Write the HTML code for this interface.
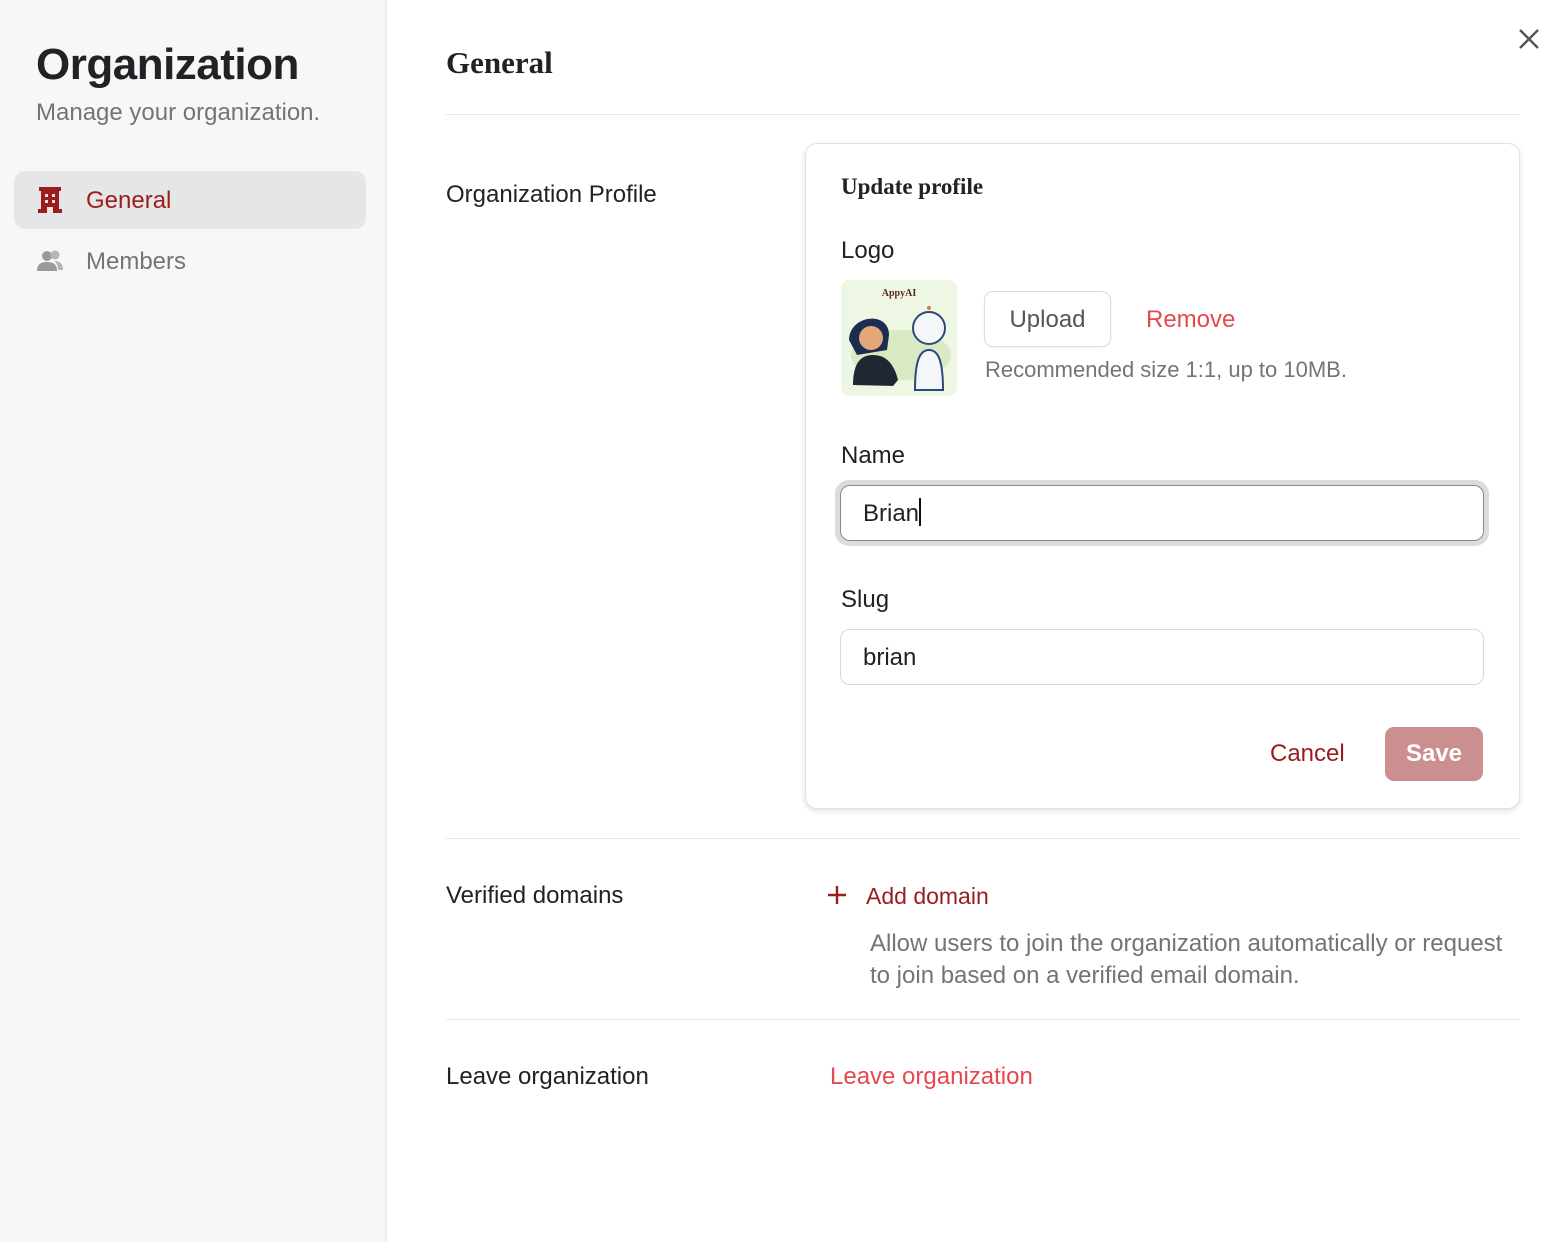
<!DOCTYPE html>
<html><head><meta charset="utf-8"><style>
*{box-sizing:border-box;margin:0;padding:0}
body{width:1556px;height:1242px;position:relative;background:#fff;font-family:"Liberation Sans",sans-serif;color:#212126;overflow:hidden}
.a{position:absolute;white-space:nowrap}
.side{position:absolute;left:0;top:0;width:387px;height:1242px;background:#f7f7f7;border-right:2px solid #ececec}
.hr{position:absolute;left:446px;width:1074px;height:1px;background:#e8e8e8}
.card{position:absolute;left:805px;top:143px;width:715px;height:666px;background:#fff;border:1px solid #e2e2e2;border-radius:12px;box-shadow:0 2px 6px rgba(0,0,0,.12)}
.inp{position:absolute;left:840px;width:644px;height:56px;border:1px solid #d9d9d9;border-radius:10px;font-size:24px;padding:0 22px;line-height:54px}
</style></head><body>
<div class="side"></div>
<div class="a" style="left:36px;top:40px;font-size:44px;font-weight:bold;letter-spacing:-.5px">Organization</div>
<div class="a" style="left:36px;top:99px;font-size:24px;color:#747474">Manage your organization.</div>
<div class="a" style="left:14px;top:171px;width:352px;height:58px;background:#e6e6e6;border-radius:11px"></div>
<svg class="a" style="left:38px;top:187px" width="24" height="26" viewBox="0 0 24 26"><path fill="#9b1c1c" d="M1 0h22v4h-2v18h3v4H15v-6h-6v6H0v-4h3V4H1z"/><rect x="7" y="7" width="3" height="3" fill="#e6e6e6"/><rect x="14" y="7" width="3" height="3" fill="#e6e6e6"/><rect x="7" y="13" width="3" height="3" fill="#e6e6e6"/><rect x="14" y="13" width="3" height="3" fill="#e6e6e6"/></svg>
<div class="a" style="left:86px;top:187px;font-size:24px;color:#9b1c1c">General</div>
<svg class="a" style="left:37px;top:250px" width="27" height="22" viewBox="0 0 27 22"><circle cx="10" cy="6" r="5" fill="#9a9a9a"/><circle cx="18" cy="5" r="4.5" fill="#b5b5b5"/><path d="M0 21c0-7 4-9 10-9s10 2 10 9z" fill="#9a9a9a"/><path d="M17 11c5 0 9 2 9 9h-5c0-4-1-7-4-9z" fill="#b5b5b5"/></svg>
<div class="a" style="left:86px;top:248px;font-size:24px;color:#747474">Members</div>

<div class="a" style="left:446px;top:45px;font-size:31px;font-weight:bold;font-family:'Liberation Serif',serif">General</div>
<svg class="a" style="left:1518px;top:28px" width="22" height="22" viewBox="0 0 22 22"><path d="M2 2l18 18M20 2L2 20" stroke="#555" stroke-width="2.4"/></svg>
<div class="hr" style="top:114px"></div>
<div class="a" style="left:446px;top:181px;font-size:24px">Organization Profile</div>

<div class="card"></div>
<div class="a" style="left:841px;top:174px;font-size:23px;font-weight:bold;font-family:'Liberation Serif',serif">Update profile</div>
<div class="a" style="left:841px;top:237px;font-size:24px">Logo</div>
<svg class="a" style="left:841px;top:280px" width="116" height="116" viewBox="0 0 116 116"><rect width="116" height="116" rx="8" fill="#eef6e4"/><ellipse cx="60" cy="75" rx="50" ry="25" fill="#d9e9c3"/><text x="58" y="16" text-anchor="middle" font-size="10" font-weight="bold" font-family="Liberation Serif" fill="#5a2a1a">AppyAI</text><path d="M8 60c0-25 40-30 40-5l-2 15-30 5z" fill="#1d2c52"/><circle cx="30" cy="58" r="12" fill="#e3a77a"/><path d="M12 105c0-25 10-30 20-30s20 5 25 25l-5 6z" fill="#1f2733"/><circle cx="88" cy="48" r="16" fill="#f4f6fa" stroke="#2c4a78" stroke-width="2"/><path d="M74 110c0-30 5-40 14-40s14 10 14 40z" fill="#f4f6fa" stroke="#2c4a78" stroke-width="2"/><circle cx="88" cy="28" r="2" fill="#e07b39"/></svg>
<div class="a" style="left:984px;top:291px;width:127px;height:56px;border:1px solid #dcdcdc;border-radius:9px;box-shadow:0 1px 2px rgba(0,0,0,.06);font-size:24px;color:#555;text-align:center;line-height:56px">Upload</div>
<div class="a" style="left:1146px;top:306px;font-size:24px;color:#e5484d">Remove</div>
<div class="a" style="left:985px;top:357px;font-size:22px;color:#747474">Recommended size 1:1, up to 10MB.</div>
<div class="a" style="left:841px;top:442px;font-size:24px">Name</div>
<div class="a" style="left:835px;top:480px;width:654px;height:66px;border-radius:14px;background:#dcdcdc"></div>
<div class="inp" style="top:485px;border:1.5px solid #8a8a8a;background:#fff;line-height:55px">Brian<span style="display:inline-block;width:2px;height:28px;background:#111;vertical-align:-5px"></span></div>
<div class="a" style="left:841px;top:586px;font-size:24px">Slug</div>
<div class="inp" style="top:629px;line-height:55px">brian</div>
<div class="a" style="left:1270px;top:740px;font-size:24px;color:#9b1c1c">Cancel</div>
<div class="a" style="left:1385px;top:727px;width:98px;height:54px;background:#cb8f8f;border-radius:9px;color:#fff;font-size:24px;font-weight:bold;text-align:center;line-height:54px">Save</div>

<div class="hr" style="top:838px"></div>
<div class="a" style="left:446px;top:882px;font-size:24px">Verified domains</div>
<svg class="a" style="left:827px;top:885px" width="20" height="20" viewBox="0 0 20 20"><path d="M10 1v18M1 10h18" stroke="#9b1c1c" stroke-width="2.4"/></svg>
<div class="a" style="left:866px;top:883px;font-size:23px;color:#9b1c1c">Add domain</div>
<div class="a" style="left:870px;top:928px;font-size:24px;color:#747474;line-height:32px">Allow users to join the organization automatically or request<br>to join based on a verified email domain.</div>
<div class="hr" style="top:1019px"></div>
<div class="a" style="left:446px;top:1063px;font-size:24px">Leave organization</div>
<div class="a" style="left:830px;top:1063px;font-size:24px;color:#e5484d">Leave organization</div>
</body></html>
